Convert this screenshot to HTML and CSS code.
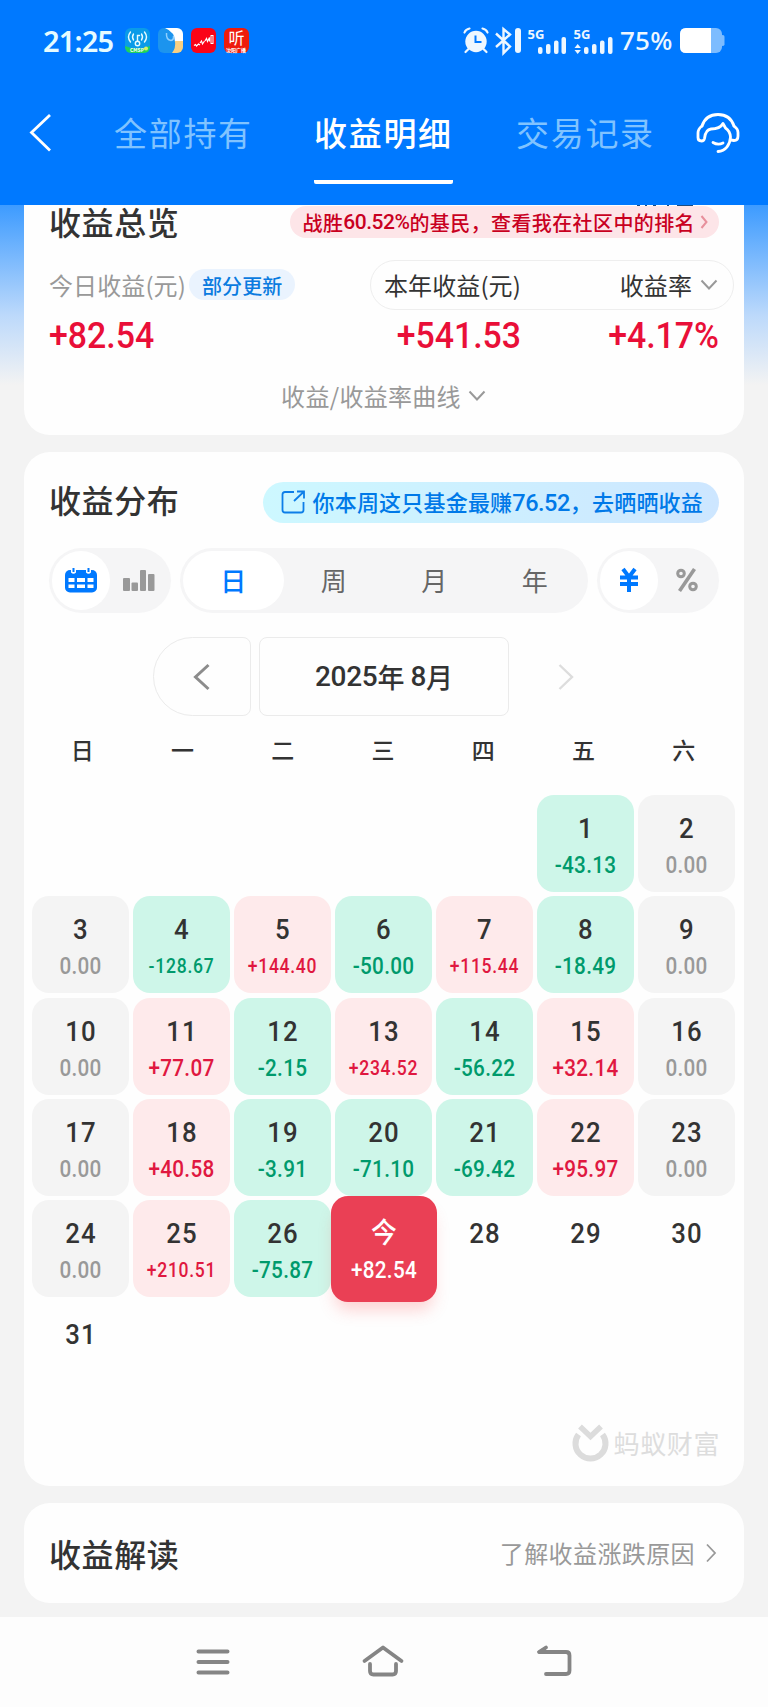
FILE: index.html
```html
<!doctype html>
<html lang="zh-CN">
<head>
<meta charset="utf-8">
<title>收益明细</title>
<link rel="stylesheet" href="styles.css">
</head>

<body>
<div class="header">
	<div class="status">
		<span class="time">21:25</span>
		<svg class="app" viewBox="0 0 25 25">
			<defs><clipPath id="r1"><rect width="25" height="25" rx="6"/></clipPath></defs>
			<g clip-path="url(#r1)">
				<rect width="25" height="25" fill="#0a9be8"/>
				<path d="M0 18Q12 23 25 18V25H0z" fill="#1fd25c"/>
				<circle cx="21" cy="20.500" r="2" fill="#d6f06a"/>
			</g>
			<g fill="none" stroke="#e8fbff" stroke-width="1.400" stroke-linecap="round">
				<circle cx="12.500" cy="15.500" r="2.200"/><path d="M12.500 13V7.500h2M8.500 6Q6.500 9 8.500 12M16.500 6Q18.500 9 16.500 12M5.500 4Q1.500 9 5.500 14M19.500 4Q23.500 9 19.500 14"/>
			</g>
			<text x="5" y="24" class="tiny">CMSP</text>
		</svg>
		<svg class="app" viewBox="0 0 25 25">
			<defs><clipPath id="r2"><rect width="25" height="25" rx="6"/></clipPath></defs>
			<g clip-path="url(#r2)">
				<rect width="25" height="25" fill="#1c94ee"/>
				<path d="M7 0H25V14H17Q17 4 7 0z" fill="#fff"/>
				<path d="M17 13H25V25H14Q18 20 17 13z" fill="#f8d083"/>
				<path d="M8.500 5Q8 12 13 12.500Q16 12 15.500 8" fill="none" stroke="#8fd0ff" stroke-width="1.500"/>
			</g>
		</svg>
		<svg class="app" viewBox="0 0 25 25">
			<rect width="25" height="25" rx="6" fill="#fb0417"/>
			<path d="M3 17.500l1.500-1 1 1.500 2-2 1.500 1M9 15l1.500-2 1 3 2-3M14 13l1.500-2.500 1 3 2-4v4" fill="none" stroke="#fff" stroke-width="1.200"/>
			<rect x="20" y="7.500" width="2" height="8" fill="none" stroke="#fff"/>
		</svg>
		<svg class="app" viewBox="0 0 25 25">
			<rect width="25" height="25" rx="6" fill="#ee1c0c"/>
			<text x="4.500" y="16" class="ting">听</text>
			<text x="2" y="23.500" class="tiny">沈阳广播</text>
		</svg>
		<svg class="sys" width="262" height="28" viewBox="0 0 262 28">
			<g fill="#eef7ff">
				<circle cx="13" cy="14.500" r="10.700"/>
				<path d="M5.500 22l-3 3M20.500 22l3 3M1.500 5.500q1-3 5-4M24.500 5.500q-1-3-5-4" stroke="#eef7ff" stroke-width="2.200" stroke-linecap="round" fill="none"/>
				<path d="M12.500 8.500v6.500h6" fill="none" stroke="#0079ff" stroke-width="2"/>
				<path d="M33 6.500l14 13-6.500 6.500V2l6.500 5.500-14 12.500" fill="none" stroke="#eef7ff" stroke-width="2.400"/>
				<rect x="52" y="1" width="6" height="25" rx="3"/>
				<text x="64.500" y="11.500" class="g5">5G</text>
				<rect x="75" y="20" width="4.500" height="7" rx="2"/><rect x="83" y="17" width="4.500" height="10" rx="2"/><rect x="91" y="13.500" width="4.500" height="13.500" rx="2"/><rect x="98.500" y="10" width="4.500" height="17" rx="2"/>
				<text x="110.500" y="11.500" class="g5">5G</text>
				<path d="M111.500 21l3.200-4 3.200 4zM111.500 23l3.200 4 3.200-4z"/>
				<rect x="121" y="20" width="4.500" height="7" rx="2"/><rect x="129" y="17" width="4.500" height="10" rx="2"/><rect x="137" y="13.500" width="4.500" height="13.500" rx="2"/><rect x="145" y="10" width="4.500" height="17" rx="2"/>
				<text x="157" y="23" class="pct">75%</text>
			</g>
			<rect x="217" y="1" width="42" height="25" rx="6" fill="#7dbcff"/>
			<rect x="258" y="8" width="3.500" height="11" rx="1.700" fill="#7dbcff"/>
			<path d="M223 1h25v25h-25q-6 0-6-6V7q0-6 6-6z" fill="#fff"/>
		</svg>
	</div>
	<div class="tabs">
		<svg class="back" width="24" height="40" viewBox="0 0 24 40"><path d="M22 2L3.500 19.500 22 37.500" fill="none" stroke="#fff" stroke-width="2.800"/></svg>
		<a class="tab">全部持有</a>
		<a class="tab on">收益明细</a>
		<a class="tab">交易记录</a>
		<svg class="service" width="44" height="42" viewBox="0 0 44 42">
			<g fill="none" stroke="#fff" stroke-width="2.800" stroke-linecap="round" stroke-linejoin="round">
				<path d="M6 14C8.500 6.500 14.500 2.500 22 2.500S35.500 6.500 38 14"/>
				<path d="M6 14Q2 17 2 21v4.500Q2 29 5.500 29q2.500 0 3-2.500 1-9 6.500-9.500 9 0 12-5.500l2.500 4.500q4.500 3 5 9C34 33 29.500 39 22 39.500"/>
				<path d="M38 14q4 3 4 6.500v3.500q0 4.500-4 4.500l-3-.500"/>
				<path d="M17 30.500q5 3 10 .500"/>
			</g>
		</svg>
	</div>
</div>

<div class="main">
	<div class="card overview">
		<svg class="peek" width="64" height="1" viewBox="0 0 64 1"><path d="M3 0h3M11 0h2M19 0h3M33 0h2M43 0h16" stroke="#1d4c80" stroke-width="2"/></svg>
		<div class="row">
			<h2>收益总览</h2>
			<a class="rank">战胜<b>60.52%</b>的基民，查看我在社区中的排名<svg width="8" height="14" viewBox="0 0 8 14"><path d="M1.500 1l5 6-5 6" fill="none" stroke="#e8909c" stroke-width="2"/></svg></a>
		</div>
		<div class="row labels">
			<span class="today">今日收益(元)</span>
			<span class="tag">部分更新</span>
			<div class="select">
				<span>本年收益(元)</span>
				<span class="rate">收益率</span>
				<svg width="18" height="12" viewBox="0 0 18 12"><path d="M1.500 1.500L9 9.500l7.500-8" fill="none" stroke="#999" stroke-width="2"/></svg>
			</div>
		</div>
		<div class="nums">
			<span>+82.54</span>
			<span>+541.53</span>
			<span>+4.17%</span>
		</div>
		<div class="curve">收益/收益率曲线<svg width="18" height="12" viewBox="0 0 18 12"><path d="M1.500 1.500L9 9.500l7.500-8" fill="none" stroke="#999" stroke-width="2"/></svg></div>
	</div>

	<div class="card dist">
		<div class="row">
			<h2>收益分布</h2>
			<a class="share">
				<svg width="25" height="25" viewBox="0 0 25 25"><path d="M13 2H4Q1.500 2 1.500 4.500V20Q1.500 22.500 4 22.500H20Q22.500 22.500 22.500 20V12M16 1.500h7v7M22.500 2L13 11" fill="none" stroke="#0d7ee8" stroke-width="1.800"/></svg>
				<span>你本周这只基金最赚<b>76.52</b>，去晒晒收益</span>
			</a>
		</div>
		<div class="filters">
			<div class="seg small">
				<span class="on"><svg width="34" height="25" viewBox="0 0 34 25">
					<rect x="1" y="2" width="32" height="22.500" rx="5" fill="#0079ff"/>
					<path d="M7 0v4.500q2.500 2.500 5 0V0zM22 0v4.500q2.500 2.500 5 0V0z" fill="#fff"/>
					<path d="M9.500 0v4M24.500 0v4" stroke="#0079ff" stroke-width="2"/>
					<path d="M4.500 10h6v4h-6zM13 10h8v4h-8zM23.500 10h6v4h-6zM4.500 16.500h6v3.500h-6zM13 16.500h8v3.500h-8zM23.500 16.500h6v3.500h-6z" fill="#fff"/>
				</svg></span>
				<span><svg width="32" height="22" viewBox="0 0 32 22" fill="#999"><rect y="9" width="7" height="13" rx="1"/><rect x="8.500" y="13.500" width="6.500" height="8.500" rx="1"/><rect x="17" y="1" width="6" height="21" rx="1"/><rect x="25" y="5" width="6.500" height="17" rx="1"/></svg></span>
			</div>
			<div class="seg wide">
				<span class="on">日</span><span>周</span><span>月</span><span>年</span>
			</div>
			<div class="seg small">
				<span class="on"><svg width="20" height="25" viewBox="0 0 20 25"><path d="M4 1l6 8 6-8M1 9.500h18M1 16h18M10 8v16" fill="none" stroke="#0079ff" stroke-width="4"/></svg></span>
				<span><svg width="22" height="24" viewBox="0 0 22 24" fill="none" stroke="#999" stroke-width="3"><circle cx="5" cy="5.500" r="3.300"/><circle cx="17" cy="18.500" r="3.300"/><path d="M18.500 1L3.500 23" stroke-width="3.600"/></svg></span>
			</div>
		</div>
		<div class="picker">
			<a class="prev"><svg width="17" height="26" viewBox="0 0 17 26"><path d="M15.500 1L2.500 13l13 12" fill="none" stroke="#8c8c8c" stroke-width="3"/></svg></a>
			<a class="month"><b>2025</b>年 <b>8</b>月</a>
			<a class="next"><svg width="17" height="26" viewBox="0 0 17 26"><path d="M1.500 1L14 13 1.500 25" fill="none" stroke="#ddd" stroke-width="2.400"/></svg></a>
		</div>
		<div class="week"><span>日</span><span>一</span><span>二</span><span>三</span><span>四</span><span>五</span><span>六</span></div>
		<div class="days">
			<div class="down first"><b>1</b><em>-43.13</em></div>
			<div class="zero"><b>2</b><em>0.00</em></div>

			<div class="zero"><b>3</b><em>0.00</em></div>
			<div class="down long"><b>4</b><em>-128.67</em></div>
			<div class="up long"><b>5</b><em>+144.40</em></div>
			<div class="down"><b>6</b><em>-50.00</em></div>
			<div class="up long"><b>7</b><em>+115.44</em></div>
			<div class="down"><b>8</b><em>-18.49</em></div>
			<div class="zero"><b>9</b><em>0.00</em></div>

			<div class="zero"><b>10</b><em>0.00</em></div>
			<div class="up"><b>11</b><em>+77.07</em></div>
			<div class="down"><b>12</b><em>-2.15</em></div>
			<div class="up long"><b>13</b><em>+234.52</em></div>
			<div class="down"><b>14</b><em>-56.22</em></div>
			<div class="up"><b>15</b><em>+32.14</em></div>
			<div class="zero"><b>16</b><em>0.00</em></div>

			<div class="zero"><b>17</b><em>0.00</em></div>
			<div class="up"><b>18</b><em>+40.58</em></div>
			<div class="down"><b>19</b><em>-3.91</em></div>
			<div class="down"><b>20</b><em>-71.10</em></div>
			<div class="down"><b>21</b><em>-69.42</em></div>
			<div class="up"><b>22</b><em>+95.97</em></div>
			<div class="zero"><b>23</b><em>0.00</em></div>

			<div class="zero"><b>24</b><em>0.00</em></div>
			<div class="up long"><b>25</b><em>+210.51</em></div>
			<div class="down"><b>26</b><em>-75.87</em></div>
			<div class="now"><b>今</b><em>+82.54</em></div>
			<div><b>28</b></div>
			<div><b>29</b></div>
			<div><b>30</b></div>

			<div><b>31</b></div>
		</div>
		<div class="brand">
			<svg width="37" height="39" viewBox="0 0 37 39" fill="none" stroke="#dcdcdc">
				<path d="M6.500 10.500A15 15 0 1 0 30.500 10.500" stroke-width="6"/>
				<path d="M8 2.500l10.500 10L29 2.500" stroke-width="5.500"/>
			</svg>
			<span>蚂蚁财富</span>
		</div>
	</div>

	<div class="card read">
		<h2>收益解读</h2>
		<a>了解收益涨跌原因<svg width="12" height="20" viewBox="0 0 12 20"><path d="M2 1.500l8 8.500-8 8.500" fill="none" stroke="#999" stroke-width="1.800"/></svg></a>
	</div>
</div>

<div class="nav">
	<svg width="36" height="34" viewBox="0 0 36 34"><path d="M4.500 6.500h29M4.500 17h29M4.500 27.500h29" stroke="#858585" stroke-width="4" stroke-linecap="round"/></svg>
	<svg width="44" height="34" viewBox="0 0 44 34"><path d="M3.500 16L22 2.500 40.500 16M9 19v7q0 3.500 3.500 3.500h19Q35 29.500 35 26V19" fill="none" stroke="#858585" stroke-width="3.800" stroke-linecap="round" stroke-linejoin="round"/></svg>
	<svg width="38" height="34" viewBox="0 0 38 34"><path d="M10 2.500L3 7H30q3.500 0 3.500 3.500v15q0 3.500-3.500 3.500H10" fill="none" stroke="#858585" stroke-width="3.800" stroke-linecap="round" stroke-linejoin="round"/><path d="M1 7l9-6v6z" fill="#858585"/></svg>
</div>
</body>
</html>
```
FILE: styles.css
```css
*{ margin:0; padding:0; box-sizing:border-box;}
body{ width:768px; height:1707px; overflow:hidden; background:#f3f3f3; color:#333; font-family:"Noto Sans CJK SC",sans-serif;}
svg{ display:block; flex:none; overflow:visible;}
em{ font-style:normal;}

.header{ height:205px; background:#0079ff; color:#fff; overflow:hidden;}
.status{ height:82px; padding:0 43px; display:flex; align-items:center;}
.time{ width:82px; font:600 29px/40px "Noto Sans",sans-serif; letter-spacing:-.8px; color:#e6fbff;}
.app{ width:25px; height:25px; margin-right:8px; margin-top:-2px;}
.tiny{ font:700 5px "Noto Sans CJK SC",sans-serif; fill:#fff;}
.ting{ font:400 16px "Noto Sans CJK SC",sans-serif; fill:#fff;}
.sys{ margin-left:auto; margin-right:0; margin-top:-1px;}
.g5{ font:700 13px "Noto Sans",sans-serif;}
.pct{ font:500 26px "Noto Sans",sans-serif; letter-spacing:.2px;}

.tabs{ height:123px; padding-left:28px; display:flex; align-items:flex-start;}
.back{ margin:31px 61px 0 0;}
.tab{ width:139px; height:102px; margin-right:62px; font-size:33px; line-height:101px; letter-spacing:1.7px; color:#80c3ff; text-indent:1px; white-space:nowrap;}
.tab.on{ color:#fff; font-weight:500; border-bottom:4px solid #fff; border-radius:2px; text-indent:0;}
.service{ margin:30px 0 0 -20px;}

.main{ height:1412px; padding:0 24px; background:linear-gradient(#3d9bff,#bcd9fb 110px,#f3f3f3 180px); display:flex; flex-direction:column; gap:17px;}
.card{ background:#fefefe; border-radius:26px;}
.row{ display:flex; align-items:center; justify-content:space-between;}
h2{ font-size:32px; font-weight:500; line-height:40px; letter-spacing:.6px;}

.overview{ height:230px; padding:0 25px; border-radius:0 0 26px 26px; position:relative;}
.overview h2{ margin-top:-5px;}
.peek{ position:absolute; left:610px; top:0; overflow:hidden;}
.overview .row:nth-child(2){ height:36px;}
.rank{ height:32px; padding:0 11px 0 13px; margin-top:-2px; border-radius:16px; background:#fde5e8; color:#c9001f; display:flex; align-items:center; font-size:20px; font-weight:500; letter-spacing:.4px; white-space:nowrap;}
.rank b{ font:500 21px Roboto,sans-serif; letter-spacing:-.5px;}
.rank svg{ margin-left:5px;}
.labels{ margin:19px -15px 0 0; height:49px; justify-content:flex-start; font-size:24px; letter-spacing:.1px;}
.today{ width:140px; color:#999; white-space:nowrap;}
.tag{ height:31px; padding:0 13px; border-radius:16px; background:#eaf3fe; color:#0a7be0; font-size:20px; line-height:33px; font-weight:500; letter-spacing:.1px; white-space:nowrap;}
.select{ width:364px; height:50px; margin-left:auto; padding:0 15px 0 13px; border:1px solid #eee; border-radius:25px; display:flex; align-items:center; white-space:nowrap;}
.rate{ margin-left:auto;}
.select svg{ margin-left:8px;}
.nums{ margin-top:7px; display:grid; grid-template-columns:1fr 185px 198px; font:500 36px/40px Roboto,sans-serif; color:#e90f38;}
/* narrow the digits a bit */
.nums span{ transform:scaleX(.94); transform-origin:left; letter-spacing:0;}
.nums span+span{ text-align:right; transform-origin:right;}
.curve{ margin-top:22px; display:flex; align-items:center; justify-content:center; font-size:24px; line-height:36px; letter-spacing:.3px; color:#999;}
.curve svg{ margin-left:7px; margin-right:1px;}

.dist{ height:1034px; padding:30px 8px 0;}
.dist .row{ height:41px; padding:0 17px;}
.dist h2{ margin-top:-8px;}
.share{ height:41px; padding:0 16px 0 18px; border-radius:21px; background:linear-gradient(90deg,#cdf8ff,#cde6ff); color:#0079e8; display:flex; align-items:center; font-size:22px; font-weight:500; letter-spacing:.2px; white-space:nowrap;}
.share svg{ margin-right:7px;}
.share span{ margin-top:-4px;}
.share b{ font:500 23.5px Roboto,sans-serif; letter-spacing:-.5px;}
.filters{ margin-top:25px; padding:0 17px; display:flex; justify-content:space-between;}
.seg{ height:65px; padding:3px; border-radius:33px; background:#f5f5f6; display:flex; font-size:26px; line-height:36px; color:#666;}
.seg span{ flex:1; padding-bottom:1px; display:flex; align-items:center; justify-content:center;}
.seg .on{ border-radius:30px; background:#fff; color:#0079ff; font-weight:500;}
.small{ width:122px;}
.wide{ width:408px;}
.picker{ margin:24px 0 0 121px; display:flex; gap:8px;}
.picker a{ height:79px; border:1px solid #ebebeb; display:flex; align-items:center; justify-content:center;}
.prev{ width:98px; border-radius:40px 8px 8px 40px;}
.prev svg{ margin-left:-2px;}
.month{ width:250px; border-radius:8px; font-size:27px; font-weight:500; white-space:pre;}
.month b{ font:500 28px Roboto,sans-serif; letter-spacing:-.3px;}
.picker .next{ width:98px; border-color:transparent;}
.week{ margin:13px 0 0; padding-right:2px; display:flex; font-size:23px; line-height:40px; font-weight:500; text-align:center;}
.week span{ flex:1;}
.days{ margin-top:26px; display:grid; grid-template-columns:repeat(7,97px); grid-auto-rows:97px; gap:4.3px 4px; text-align:center;}
.days div{ padding-top:17px; border-radius:17px;}
.days b{ display:block; font:500 28px/34px Roboto,"Noto Sans CJK SC",sans-serif; letter-spacing:1.2px; text-indent:1px; transform:scaleX(.92);}
.days em{ display:block; margin-top:5px; font:500 23px/30px Roboto,sans-serif; letter-spacing:.3px; transform:scaleX(.9);}
.days .long em{ font-size:19.5px; letter-spacing:.8px;}
.days .first{ grid-column:6;}
.days .zero{ background:#f4f4f4;}
.days .zero em{ color:#999;}
.days .up{ background:#feeaeb;}
.days .up em{ color:#e01840;}
.days .down{ background:#cef6e9;}
.days .down em{ color:#009a6c;}
.days .now{ margin:-4.5px; padding-top:21.5px; background:#ea4055; color:#fff; box-shadow:0 12px 16px -4px rgba(250,80,80,.25);}
.brand{ margin-top:23px; padding-right:16px; display:flex; align-items:center; justify-content:flex-end; gap:5px; font-size:26px; line-height:44px; letter-spacing:.6px; color:#ddd;}

.read{ height:100px; padding:0 27px 0 25px; display:flex; align-items:center; justify-content:space-between;}
.read a{ display:flex; align-items:center; font-size:24px; line-height:36px; letter-spacing:.4px; color:#999;}
.read a,.read h2{ margin-top:-1px;}
.read svg{ margin-left:10px;}

.nav{ height:90px; padding:0 194px; background:#fdfdfd; display:flex; align-items:center; justify-content:space-between;}
```
